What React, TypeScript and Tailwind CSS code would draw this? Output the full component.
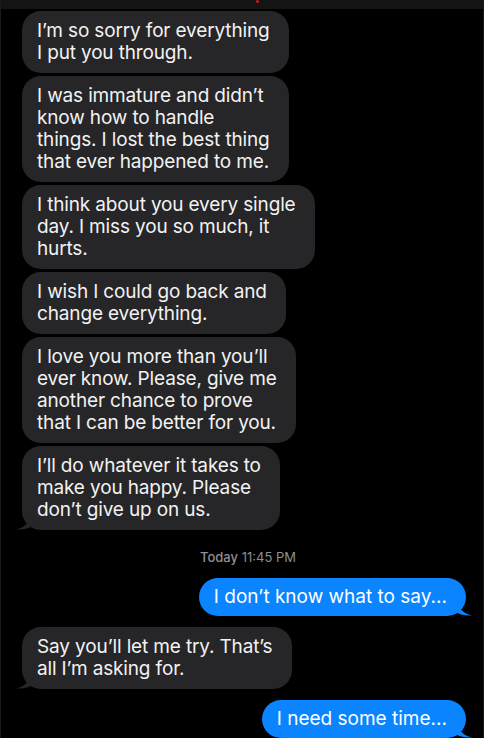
import React from "react";

const font = { fontFamily: "Inter, 'Noto Sans', sans-serif" };

function TailLeft({ color }: { color: string }) {
  return (
    <svg className="absolute -left-[6px] bottom-0" width="20" height="16" viewBox="0 0 20 16">
      <path d="M14 0 C14 8 10 13 0 15.5 C8 16 14 14 20 10 L20 0 Z" fill={color} />
    </svg>
  );
}

function TailRight({ color }: { color: string }) {
  return (
    <svg className="absolute -right-[6px] bottom-0" width="20" height="16" viewBox="0 0 20 16">
      <path d="M6 0 C6 8 10 13 20 15.5 C12 16 6 14 0 10 L0 0 Z" fill={color} />
    </svg>
  );
}

function Gray({ lines, tail, className = "" }: { lines: string[]; tail?: boolean; className?: string }) {
  return (
    <div className={`relative w-fit rounded-[19px] bg-[#262628] pl-[15px] pr-[19px] py-[9px] text-[19px] leading-[22px] text-[#f2f2f2] tracking-[-0.15px] ${className}`}>
      {tail && <TailLeft color="#262628" />}
      <span className="relative">
        {lines.map((l, i) => (
          <React.Fragment key={i}>
            {l}
            {i < lines.length - 1 && <br />}
          </React.Fragment>
        ))}
      </span>
    </div>
  );
}

function Blue({ text, className = "" }: { text: string; className?: string }) {
  return (
    <div className={`relative ml-auto w-fit rounded-[19px] bg-[#0a84ff] pl-[15px] pr-[19px] py-[8px] text-[19px] leading-[22px] text-white ${className}`}>
      <TailRight color="#0a84ff" />
      <span className="relative">{text}</span>
    </div>
  );
}

export default function App() {
  return (
    <div className="w-[484px] h-[738px] overflow-hidden bg-black border-x border-[#1a1a1a] flex flex-col" style={font}>
      <div className="h-[9px] bg-[#141414] flex justify-center shrink-0">
        <div className="ml-[30px] w-[3px] h-[3px] rounded-full bg-[#e0141e]" />
      </div>
      <div className="flex flex-col pl-[21px] pr-[17px] pt-[2px]">
        <div className="flex flex-col gap-[3px]">
          <Gray lines={["I\u2019m so sorry for everything", "I put you through."]} />
          <Gray lines={["I was immature and didn\u2019t", "know how to handle", "things. I lost the best thing", "that ever happened to me."]} />
          <Gray lines={["I think about you every single", "day. I miss you so much, it", "hurts."]} />
          <Gray lines={["I wish I could go back and", "change everything."]} />
          <Gray lines={["I love you more than you\u2019ll", "ever know. Please, give me", "another chance to prove", "that I can be better for you."]} />
          <Gray tail lines={["I\u2019ll do whatever it takes to", "make you happy. Please", "don\u2019t give up on us."]} />
        </div>
        <div className="mt-[18px] text-center text-[13px] leading-[18px] text-[#8e8e93] pl-[8px]">
          <span className="font-medium">Today</span> 11:45 PM
        </div>
        <Blue className="mt-[12px]" text={"I don\u2019t know what to say..."} />
        <Gray tail className="mt-[11px]" lines={["Say you\u2019ll let me try. That\u2019s", "all I\u2019m asking for."]} />
        <Blue className="mt-[11px]" text="I need some time..." />
      </div>
    </div>
  );
}
